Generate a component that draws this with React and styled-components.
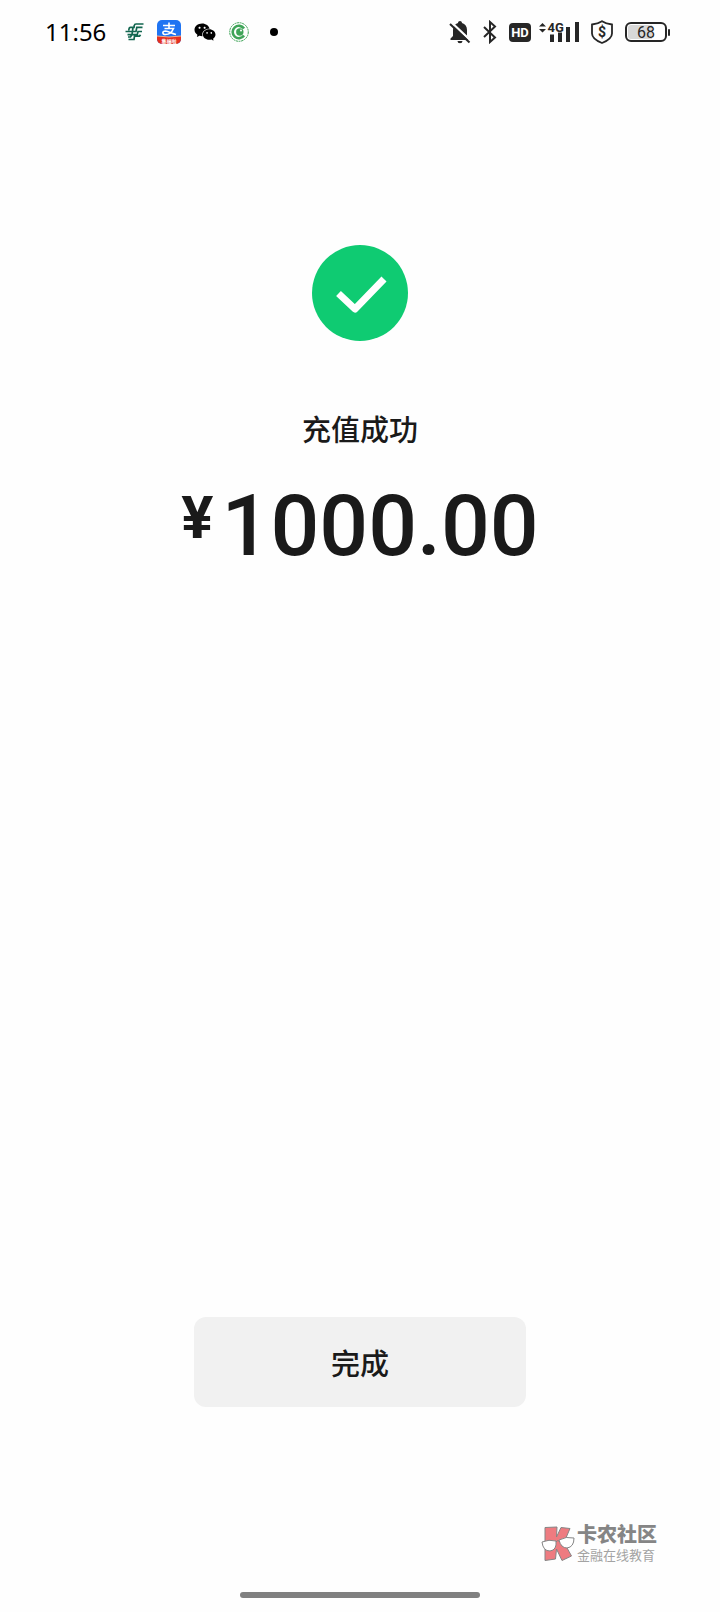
import React from "react";
import styled, { createGlobalStyle } from "styled-components";
import { AiFillWechat } from "react-icons/ai";

const GlobalStyle = createGlobalStyle`
  * {
    box-sizing: border-box;
  }

  body {
    margin: 0;
    background: #fefefe;
    color: #1a1a1a;
    font-family: "Noto Sans", "Noto Sans CJK SC", sans-serif;
  }
`;

const Page = styled.div`
  min-height: 100vh;
  display: flex;
  flex-direction: column;
`;

const StatusBar = styled.header`
  height: 64px;
  padding: 0 50px 0 45px;
  display: flex;
  align-items: center;
  justify-content: space-between;
`;

const StatusGroup = styled.div`
  display: flex;
  align-items: center;
  gap: ${({ gap }) => gap}px;

  svg {
    display: block;
    flex: none;
  }
`;

const Clock = styled.time`
  margin-right: 7px;
  color: #000;
  font-size: 24px;
  font-weight: 400;
  line-height: 32px;
`;

const Dot = styled.span`
  width: 8px;
  height: 8px;
  margin-left: 9px;
  border-radius: 50%;
  background: #000;
`;

const HdBadge = styled.span`
  width: 22px;
  height: 19px;
  border-radius: 4px;
  background: #262626;
  color: #fff;
  font-family: Roboto, sans-serif;
  font-size: 13px;
  font-weight: 700;
  line-height: 19px;
  text-align: center;
`;

const Battery = styled.span`
  display: flex;
  align-items: center;

  &::after {
    content: "";
    width: 2px;
    height: 7px;
    margin-left: 1px;
    border-radius: 1px;
    background: #262626;
  }
`;

const BatteryCell = styled.span`
  width: 42px;
  height: 20px;
  padding: 1px;
  border: 2px solid #262626;
  border-radius: 6px;
  background: linear-gradient(to right, #d8d8d8 68%, #fff 68%) content-box;
  color: #262626;
  font-family: Roboto, sans-serif;
  font-size: 16px;
  line-height: 15px;
  text-align: center;
`;

const Content = styled.main`
  flex: 1;
  display: flex;
  flex-direction: column;
  align-items: center;
  padding-top: 181px;
`;

const ResultIcon = styled.svg`
  width: 96px;
  height: 96px;
`;

const ResultText = styled.h1`
  margin: 67px 0 0;
  font-size: 29px;
  font-weight: 500;
  line-height: 44px;
`;

const Amount = styled.p`
  display: flex;
  align-items: flex-start;
  gap: 8px;
  margin: 24px 0 0;
  font-family: Roboto, sans-serif;
  font-size: 86px;
  font-weight: 500;
  line-height: 100px;
`;

const Currency = styled.span`
  font-size: 60px;
  font-weight: 700;
  line-height: 84px;
`;

const DoneButton = styled.button`
  width: 46%;
  height: 90px;
  margin: auto 0 0;
  border: 0;
  border-radius: 12px;
  background: #f1f1f1;
  color: #1a1a1a;
  font-family: inherit;
  font-size: 29px;
  font-weight: 500;
  cursor: pointer;
`;

const Footer = styled.footer`
  display: flex;
  flex-direction: column;
  align-items: center;
  padding: 116px 63px 14px;
`;

const Brand = styled.div`
  align-self: flex-end;
  display: flex;
  align-items: center;
  gap: 2px;
  margin-bottom: 28px;
`;

const BrandName = styled.div`
  color: #858585;
  font-size: 20px;
  font-weight: 900;
  line-height: 24px;
`;

const BrandTagline = styled.div`
  color: #a3a3a3;
  font-size: 13px;
  line-height: 17px;
`;

const HomeIndicator = styled.div`
  width: 240px;
  height: 6px;
  border-radius: 3px;
  background: #808080;
`;

const PostBankIcon = () => (
  <svg width="20" height="18" viewBox="0 0 20 18" fill="none" stroke="#12664f" strokeWidth="1.700">
    <path d="M18.500 1H11Q9.500 1 9.300 2.500L9 4.300H5.500Q4.200 4.300 4 5.800L3.800 7.500M17.500 4.300H11.800L11 8.500H.5M17 8.500H13L12.300 11.700H2.500M15.500 11.700L14.500 13.200H9.500L9 16.500H3.500M8 4.300L7 11.700L5.500 14H3" />
  </svg>
);

const AlipayIcon = () => (
  <svg width="24" height="24" viewBox="0 0 24 24">
    <defs>
      <clipPath id="alipay">
        <rect width="24" height="24" rx="5" />
      </clipPath>
    </defs>
    <g clipPath="url(#alipay)">
      <path fill="#1f74f2" d="M0 0h24v24H0z" />
      <path fill="#e5301f" d="M0 16q12 2 24 0v8H0z" />
      <path stroke="#f7b08a" fill="none" d="M0 16q12 2 24 0" />
    </g>
    <g fill="none" stroke="#fff" strokeWidth="1.600">
      <path d="M6 5.500h12M12 2.500v6M7.500 8.500h9c-1.500 3.500-4.500 6-8 6c-3.500 0-3.500-3.500 0-3.500c3 .2 6.500 2.500 10.500 3.500" />
    </g>
    <text x="12" y="22.500" textAnchor="middle" fontSize="5" fontWeight="700" fill="#fff">
      集福啦
    </text>
  </svg>
);

const CoinIcon = () => (
  <svg width="20" height="20" viewBox="0 0 20 20" fill="none" stroke="#3fa458">
    <circle cx="10" cy="10" r="9.300" strokeDasharray="2 .6" />
    <path strokeWidth="2.600" d="M15 13.500A6.200 6.200 0 1 1 15 6.500" />
    <circle cx="10.800" cy="10" r="3.700" fill="#3fa458" stroke="none" />
    <circle cx="12" cy="8.600" r="1" fill="#fff" stroke="none" />
  </svg>
);

const MutedBellIcon = () => (
  <svg width="22" height="24" viewBox="0 0 22 24">
    <path
      fill="#262626"
      d="M11 1c1.100 0 2 .9 2 2c3.200.9 5 3.600 5 7v6l2.500 2.500V20h-19v-1.500L4 16v-6c0-3.400 1.800-6.100 5-7c0-1.100.9-2 2-2zM8.500 21h5a2.500 2.300 0 0 1-5 0z"
    />
    <path stroke="#fefefe" strokeWidth="2.400" d="M2.500 2.500L22 21" />
    <path stroke="#262626" strokeWidth="2" d="M1 4L20.500 22.500" />
  </svg>
);

const BluetoothIcon = () => (
  <svg width="14" height="24" viewBox="0 0 14 24" fill="none" stroke="#262626" strokeWidth="2">
    <path d="M1 7l11 10.500L7 22V2l5 4.500L1 17" />
  </svg>
);

const SignalIcon = () => (
  <svg width="40" height="24" viewBox="0 0 40 24" fill="#262626">
    <path d="M0 6.500L3.500 3L7 6.500zM0 9h7l-3.500 3.500zM11 14.500h4V22h-4zM19 12.500h4V22h-4zM27 7h4v15h-4zM36 2h4v20h-4z" />
    <text x="8.500" y="11.500" fontFamily="Roboto, sans-serif" fontSize="13" fontWeight="700">
      4G
    </text>
  </svg>
);

const ShieldIcon = () => (
  <svg width="22" height="24" viewBox="0 0 22 24">
    <path
      fill="none"
      stroke="#262626"
      strokeWidth="1.800"
      d="M11 1.200c3 2 6 2.800 10 3.300v9c0 4.500-5 7.500-10 9.500c-5-2-10-5-10-9.500v-9c4-.5 7-1.300 10-3.300z"
    />
    <text
      x="11"
      y="17"
      textAnchor="middle"
      fontFamily="Roboto, sans-serif"
      fontSize="14"
      fontWeight="700"
      fill="#262626"
    >
      $
    </text>
  </svg>
);

const BrandLogo = () => (
  <svg width="34" height="36" viewBox="0 0 34 36" stroke="#858585">
    <path
      fill="#ee7b80"
      d="M4 1.500L16 1l-.5 10L20 1.500l9 1l-6 14l7.500 13.500L21 34.500L15.500 23l-1 10L4 34.500z"
    />
    <path
      fill="#fff"
      d="M1 16q7-3 14-1q1 9-6 10q-7 0-8-9zM18 14q7-4 15-2q0 9-7 10q-6 0-8-8z"
    />
    <path fill="none" d="M15 16q1-2 3-1" />
  </svg>
);

const App = () => {
  return (
    <>
      <GlobalStyle />
      <Page>
        <StatusBar>
          <StatusGroup gap={12}>
            <Clock>11:56</Clock>
            <PostBankIcon />
            <AlipayIcon />
            <AiFillWechat size={24} color="#000" />
            <CoinIcon />
            <Dot />
          </StatusGroup>
          <StatusGroup gap={12}>
            <MutedBellIcon />
            <BluetoothIcon />
            <StatusGroup gap={8}>
              <HdBadge>HD</HdBadge>
              <SignalIcon />
            </StatusGroup>
            <ShieldIcon />
            <Battery>
              <BatteryCell>68</BatteryCell>
            </Battery>
          </StatusGroup>
        </StatusBar>

        <Content>
          <ResultIcon viewBox="0 0 96 96">
            <circle cx="48" cy="48" r="48" fill="#0fcb72" />
            <path
              d="M26.500 48.500L43 64L72 34"
              fill="none"
              stroke="#fff"
              strokeWidth="7"
              strokeLinejoin="round"
            />
          </ResultIcon>
          <ResultText>充值成功</ResultText>
          <Amount>
            <Currency>¥</Currency>
            1000.00
          </Amount>
          <DoneButton type="button">完成</DoneButton>
        </Content>

        <Footer>
          <Brand>
            <BrandLogo />
            <div>
              <BrandName>卡农社区</BrandName>
              <BrandTagline>金融在线教育</BrandTagline>
            </div>
          </Brand>
          <HomeIndicator />
        </Footer>
      </Page>
    </>
  );
};

export default App;
